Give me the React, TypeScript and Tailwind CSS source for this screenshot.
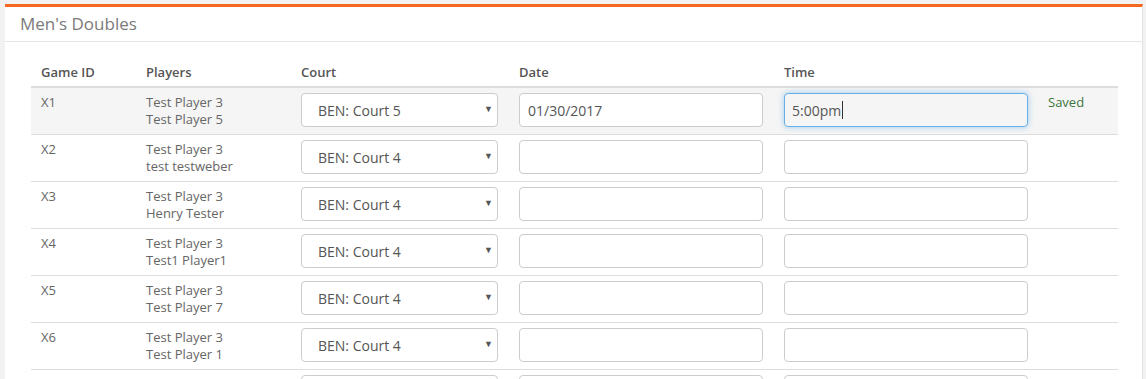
import React from 'react';

type Game = {
  id: string;
  players: [string, string];
  court: string;
  date?: string;
  time?: string;
  saved?: boolean;
};

const games: Game[] = [
  { id: 'X1', players: ['Test Player 3', 'Test Player 5'], court: 'BEN: Court 5', date: '01/30/2017', time: '5:00pm', saved: true },
  { id: 'X2', players: ['Test Player 3', 'test testweber'], court: 'BEN: Court 4' },
  { id: 'X3', players: ['Test Player 3', 'Henry Tester'], court: 'BEN: Court 4' },
  { id: 'X4', players: ['Test Player 3', 'Test1 Player1'], court: 'BEN: Court 4' },
  { id: 'X5', players: ['Test Player 3', 'Test Player 7'], court: 'BEN: Court 4' },
  { id: 'X6', players: ['Test Player 3', 'Test Player 1'], court: 'BEN: Court 4' },
  { id: 'X7', players: ['Test Player 3', 'Test Player 2'], court: 'BEN: Court 4' },
];

const courts = ['BEN: Court 1', 'BEN: Court 2', 'BEN: Court 3', 'BEN: Court 4', 'BEN: Court 5'];

function CourtSelect({ value }: { value: string }) {
  return (
    <div className="relative w-[197px]">
      <select
        defaultValue={value}
        className="block w-full h-[34px] appearance-none rounded-[4px] border border-[#cccccc] bg-white pl-[16px] pr-8 text-[14px] text-[#555555] outline-none"
      >
        {courts.map((c) => (
          <option key={c} value={c}>
            {c}
          </option>
        ))}
      </select>
      <span className="pointer-events-none absolute right-[5px] top-[9px] text-[9px] text-[#555555]">▼</span>
    </div>
  );
}

function TextInput({ value }: { value?: string }) {
  return (
    <input
      type="text"
      defaultValue={value}
      className="block w-[244px] h-[34px] rounded-[4px] border border-[#cccccc] bg-white px-[8px] text-[14px] text-[#555555] outline-none"
    />
  );
}

// the time field of the first row is shown while being edited
function FocusedInput({ value }: { value: string }) {
  return (
    <div className="w-[244px] h-[34px] flex items-center rounded-[4px] border border-[#66afe9] bg-[#f5f5f5] px-[7px] text-[14px] text-[#555555] shadow-[0_0_6px_rgba(102,175,233,0.6)]">
      {value}
      <span className="ml-[1px] inline-block w-px h-[18px] bg-[#333333]" />
    </div>
  );
}

export default function App() {
  return (
    <div className="min-h-screen bg-[#f2f2f2] pt-[4px] pl-[5px] pr-[3px] font-['Open_Sans',sans-serif]">
      <div className="bg-white border-t-[3px] border-[#f4681f] border-r border-r-[#e2e2e2]">
        <div className="h-[35px] flex items-center pl-[15px] border-b border-[#e6e6e6] text-[17px] text-[#7a7a7a]">
          Men's Doubles
        </div>
        <div className="pt-[13px] pl-[26px] pr-[24px] pb-6">
          <table className="w-[1087px] border-collapse table-fixed text-[13px] text-[#666666]">
            <colgroup>
              <col className="w-[105px]" />
              <col className="w-[155px]" />
              <col className="w-[218px]" />
              <col className="w-[265px]" />
              <col className="w-[264px]" />
              <col className="w-[80px]" />
            </colgroup>
            <thead>
              <tr className="border-b-2 border-[#dddddd]">
                {['Game ID', 'Players', 'Court', 'Date', 'Time', ''].map((h, i) => (
                  <th key={i} className="text-left font-semibold text-[#555555] pl-[10px] pt-[8px] pb-[5px] leading-[18px]">
                    {h}
                  </th>
                ))}
              </tr>
            </thead>
            <tbody>
              {games.map((g, i) => (
                <tr key={g.id} className={`border-b border-[#dddddd] ${i === 0 ? 'bg-[#f5f5f5]' : ''}`}>
                  <td className="align-top pl-[10px] pt-[6px] pb-[6px] leading-[17px]">{g.id}</td>
                  <td className="align-top pl-[10px] pt-[6px] pb-[6px] leading-[17px]">
                    <div>{g.players[0]}</div>
                    <div>{g.players[1]}</div>
                  </td>
                  <td className="align-top pl-[10px] pt-[5px] pb-[7px]">
                    <CourtSelect value={g.court} />
                  </td>
                  <td className="align-top pl-[10px] pt-[5px] pb-[7px]">
                    <TextInput value={g.date} />
                  </td>
                  <td className="align-top pl-[10px] pt-[5px] pb-[7px]">
                    {g.time ? <FocusedInput value={g.time} /> : <TextInput />}
                  </td>
                  <td className="align-top pl-[10px] pt-[6px] pb-[6px] leading-[17px] text-[#3c763d]">
                    {g.saved ? 'Saved' : ''}
                  </td>
                </tr>
              ))}
            </tbody>
          </table>
        </div>
      </div>
    </div>
  );
}
